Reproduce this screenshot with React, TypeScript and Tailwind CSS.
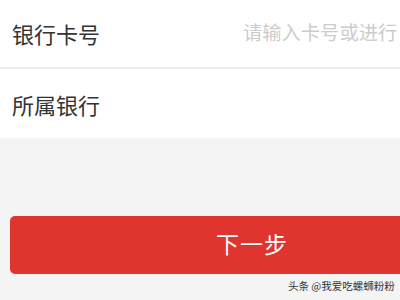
export default function App() {
  return (
    <div
      className="w-[400px] h-[300px] overflow-hidden bg-[#f4f4f4] relative"
      style={{ fontFamily: '"Noto Sans CJK SC", "Noto Sans", sans-serif' }}
    >
      <div className="bg-white w-[400px]">
        <div className="h-[67px] flex items-center pl-[12px] relative">
          <span className="text-[22px] leading-none text-[#333333] whitespace-nowrap -mt-[2px]">银行卡号</span>
          <span className="absolute left-[243px] top-[23px] text-[19.3px] leading-none text-[#cccccc] whitespace-nowrap">
            请输入卡号或进行
          </span>
        </div>
        <div className="h-[2px] bg-[#eeeeee]" />
        <div className="h-[69px] flex items-center pl-[12px]">
          <span className="text-[22px] leading-none text-[#333333] whitespace-nowrap">所属银行</span>
        </div>
      </div>
      <div className="pt-[78px] pl-[10px]">
        <div className="w-[484px] h-[58px] rounded-[5px] bg-[#e0342f] flex items-center justify-center">
          <span className="text-[23px] leading-none text-white tracking-[1px] whitespace-nowrap -mt-[4px]">下一步</span>
        </div>
      </div>
      <div className="absolute left-[288px] top-[281px] text-[10.5px] leading-none text-[#333333] whitespace-nowrap">
        头条 @我爱吃螺蛳粉粉
      </div>
    </div>
  );
}
